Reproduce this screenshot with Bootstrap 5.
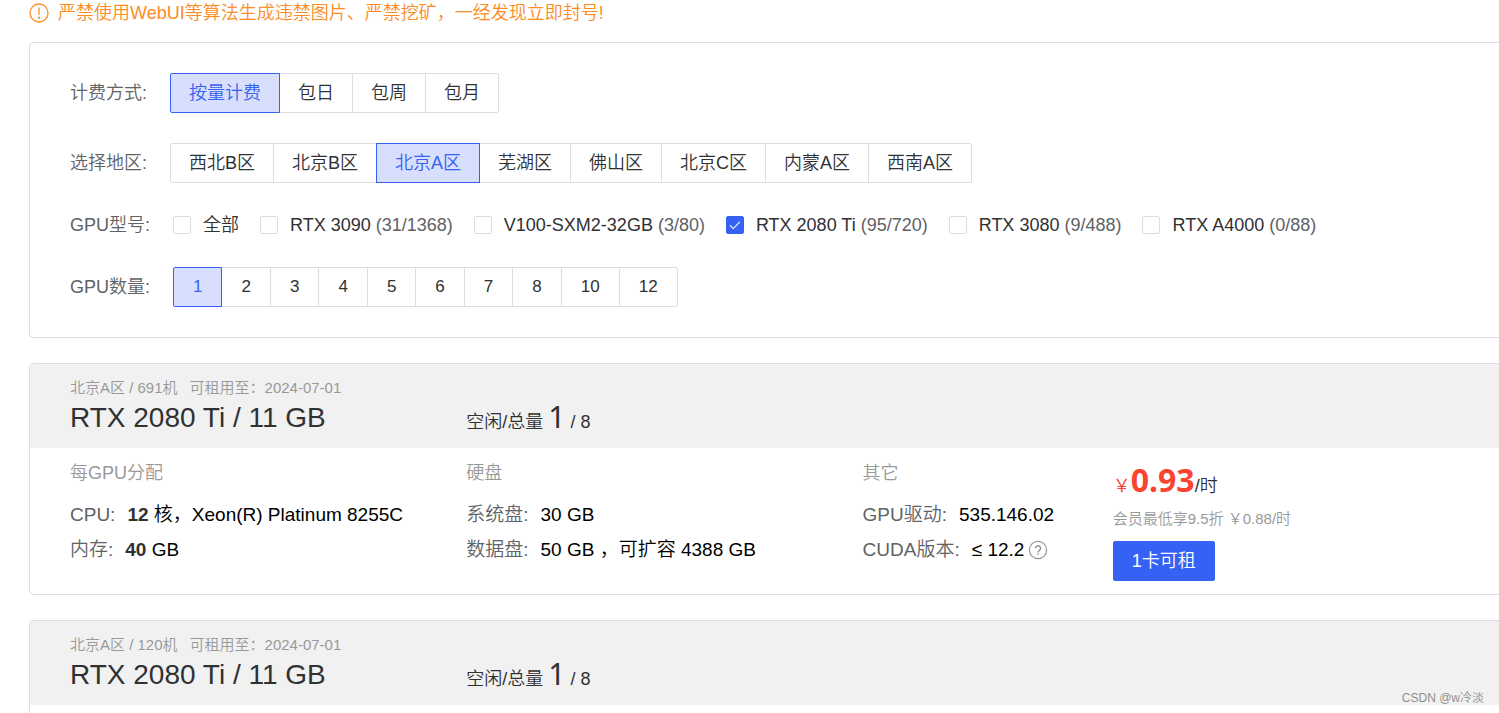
<!DOCTYPE html>
<html lang="zh-CN">
<head>
<meta charset="utf-8">
<meta name="viewport" content="width=device-width, initial-scale=1">
<title>GPU 租用</title>
<link rel="stylesheet" href="https://cdn.jsdelivr.net/npm/bootstrap@5.3.0/dist/css/bootstrap.min.css">
<style>
  :root { --line: #dcdde3; --brand: #3562f5; --brand-soft: #d7dffc; }
  body { font-family: "Liberation Sans", "Noto Sans CJK SC", sans-serif; font-size: 18px; font-weight: 350; line-height: 24px; color: #303133; background: #fff; }
  .page { padding-left: 29px; }
  .notice { color: #fc8c23; height: 26px; margin-bottom: 16px; gap: 9px; }
  .panel { border: 1px solid var(--line); border-right: 0; border-radius: 5px 0 0 5px; }
  .filters { padding: 30px 40px; display: flex; flex-direction: column; gap: 30px; margin-bottom: 25px; }
  .filter-row { gap: 23px; }
  .caption { color: #606266; }
  .options .btn { --bs-btn-padding-x: 18px; --bs-btn-padding-y: 7px; --bs-btn-font-size: 18px; --bs-btn-font-weight: 350; --bs-btn-line-height: 24px; --bs-btn-color: #303133; --bs-btn-border-color: var(--line); --bs-btn-border-radius: 2px; --bs-btn-hover-color: var(--brand); --bs-btn-hover-border-color: var(--line); --bs-btn-active-color: var(--brand); --bs-btn-active-bg: var(--brand-soft); --bs-btn-active-border-color: var(--brand); }
  .counts .btn { --bs-btn-padding-x: 19px; --bs-btn-font-size: 17px; }
  .models { gap: 21px; }
  .model { gap: 12px; }
  .model .form-check-input { width: 18px; height: 18px; margin: 0; border: 1px solid var(--line); border-radius: 2px; }
  .model .form-check-input:checked { background-color: var(--brand); border-color: var(--brand); background-image: url("data:image/svg+xml,%3Csvg xmlns='http://www.w3.org/2000/svg' viewBox='0 0 18 18'%3E%3Cpath d='M3.5 9.5l3.5 3.5L14.5 5.5' fill='none' stroke='white' stroke-width='1.3'/%3E%3C/svg%3E"); }
  .machine { margin-bottom: 25px; }
  .cells { display: grid; grid-template-columns: 396fr 396fr 250fr 386fr; padding-left: 40px; }
  .machine-head { background: #f1f1f1; height: 84px; padding-top: 14px; border-radius: 4px 0 0 0; }
  .meta { font-size: 15px; line-height: 20px; color: #999; gap: 12px; }
  .title { font-size: 28px; line-height: 34px; margin: 3px 0 0; font-weight: 400; }
  .stock { align-self: end; line-height: 34px; padding-bottom: 9px; }
  .idle { font-family: "Noto Sans", sans-serif; font-size: 30px; font-weight: 400; line-height: 24px; }
  .machine-body { height: 146px; padding-top: 13px; }
  .group { color: #999; margin-bottom: 12px; }
  .spec { font-size: 19px; line-height: 35px; color: #000; white-space: nowrap; }
  .spec .caption { margin-right: 12px; }
  .spec b { color: #303133; font-weight: 700; }
  .price { line-height: 38px; }
  .price-num { font-family: "Noto Sans", sans-serif; font-size: 32px; font-weight: 700; color: #fa4432; line-height: 38px; }
  .yen { color: #fa4432; }
  .member { font-size: 15px; line-height: 20px; color: #999; margin: 4px 0 12px; }
  .rent { --bs-btn-padding-x: 18px; --bs-btn-padding-y: 7px; --bs-btn-font-size: 18px; --bs-btn-font-weight: 350; --bs-btn-line-height: 24px; --bs-btn-bg: var(--brand); --bs-btn-border-color: var(--brand); --bs-btn-border-radius: 2px; }
  .watermark { position: absolute; right: 15px; bottom: 6px; font-size: 12px; line-height: 18px; color: #909090; }
</style>
</head>
<body>
<div class="page vh-100 overflow-hidden position-relative d-flex flex-column">
  <div class="notice d-flex align-items-center flex-shrink-0">
    <svg width="20" height="20" viewBox="0 0 20 20" fill="none" stroke="currentColor" stroke-width="1.3" aria-hidden="true"><circle cx="10" cy="10" r="9"/><path d="M10 4.5v7.5"/><circle cx="10" cy="14.7" r=".5"/></svg>
    <span>严禁使用WebUI等算法生成违禁图片、严禁挖矿，一经发现立即封号!</span>
  </div>

  <form class="panel filters flex-shrink-0">
    <div class="filter-row d-flex align-items-center">
      <span class="caption">计费方式:</span>
      <div class="btn-group options" role="group" aria-label="计费方式">
        <input class="btn-check" type="radio" name="bill" id="b1" checked><label class="btn" for="b1">按量计费</label>
        <input class="btn-check" type="radio" name="bill" id="b2"><label class="btn" for="b2">包日</label>
        <input class="btn-check" type="radio" name="bill" id="b3"><label class="btn" for="b3">包周</label>
        <input class="btn-check" type="radio" name="bill" id="b4"><label class="btn" for="b4">包月</label>
      </div>
    </div>
    <div class="filter-row d-flex align-items-center">
      <span class="caption">选择地区:</span>
      <div class="btn-group options" role="group" aria-label="选择地区">
        <input class="btn-check" type="radio" name="area" id="a1"><label class="btn" for="a1">西北B区</label>
        <input class="btn-check" type="radio" name="area" id="a2"><label class="btn" for="a2">北京B区</label>
        <input class="btn-check" type="radio" name="area" id="a3" checked><label class="btn" for="a3">北京A区</label>
        <input class="btn-check" type="radio" name="area" id="a4"><label class="btn" for="a4">芜湖区</label>
        <input class="btn-check" type="radio" name="area" id="a5"><label class="btn" for="a5">佛山区</label>
        <input class="btn-check" type="radio" name="area" id="a6"><label class="btn" for="a6">北京C区</label>
        <input class="btn-check" type="radio" name="area" id="a7"><label class="btn" for="a7">内蒙A区</label>
        <input class="btn-check" type="radio" name="area" id="a8"><label class="btn" for="a8">西南A区</label>
      </div>
    </div>
    <div class="filter-row d-flex align-items-center">
      <span class="caption">GPU型号:</span>
      <div class="models d-flex text-nowrap">
        <div class="model d-flex align-items-center"><input class="form-check-input" type="checkbox" id="m1"><label for="m1">全部</label></div>
        <div class="model d-flex align-items-center"><input class="form-check-input" type="checkbox" id="m2"><label for="m2">RTX 3090 <span class="caption">(31/1368)</span></label></div>
        <div class="model d-flex align-items-center"><input class="form-check-input" type="checkbox" id="m3"><label for="m3">V100-SXM2-32GB <span class="caption">(3/80)</span></label></div>
        <div class="model d-flex align-items-center"><input class="form-check-input" type="checkbox" id="m4" checked><label for="m4">RTX 2080 Ti <span class="caption">(95/720)</span></label></div>
        <div class="model d-flex align-items-center"><input class="form-check-input" type="checkbox" id="m5"><label for="m5">RTX 3080 <span class="caption">(9/488)</span></label></div>
        <div class="model d-flex align-items-center"><input class="form-check-input" type="checkbox" id="m6"><label for="m6">RTX A4000 <span class="caption">(0/88)</span></label></div>
      </div>
    </div>
    <div class="filter-row d-flex align-items-center">
      <span class="caption">GPU数量:</span>
      <div class="btn-group options counts" role="group" aria-label="GPU数量">
        <input class="btn-check" type="radio" name="num" id="n1" checked><label class="btn" for="n1">1</label>
        <input class="btn-check" type="radio" name="num" id="n2"><label class="btn" for="n2">2</label>
        <input class="btn-check" type="radio" name="num" id="n3"><label class="btn" for="n3">3</label>
        <input class="btn-check" type="radio" name="num" id="n4"><label class="btn" for="n4">4</label>
        <input class="btn-check" type="radio" name="num" id="n5"><label class="btn" for="n5">5</label>
        <input class="btn-check" type="radio" name="num" id="n6"><label class="btn" for="n6">6</label>
        <input class="btn-check" type="radio" name="num" id="n7"><label class="btn" for="n7">7</label>
        <input class="btn-check" type="radio" name="num" id="n8"><label class="btn" for="n8">8</label>
        <input class="btn-check" type="radio" name="num" id="n10"><label class="btn" for="n10">10</label>
        <input class="btn-check" type="radio" name="num" id="n12"><label class="btn" for="n12">12</label>
      </div>
    </div>
  </form>

  <section class="panel machine flex-shrink-0">
    <div class="machine-head cells">
      <div>
        <div class="meta d-flex"><span>北京A区 / 691机</span><span>可租用至：2024-07-01</span></div>
        <h2 class="title">RTX 2080 Ti / 11 GB</h2>
      </div>
      <div class="stock">空闲/总量 <span class="idle">1</span> / 8</div>
    </div>
    <div class="machine-body cells">
      <div>
        <div class="group">每GPU分配</div>
        <div class="spec"><span class="caption">CPU:</span><b>12</b> 核，Xeon(R) Platinum 8255C</div>
        <div class="spec"><span class="caption">内存:</span><b>40</b> GB</div>
      </div>
      <div>
        <div class="group">硬盘</div>
        <div class="spec"><span class="caption">系统盘:</span>30 GB</div>
        <div class="spec"><span class="caption">数据盘:</span>50 GB ，可扩容 4388 GB</div>
      </div>
      <div>
        <div class="group">其它</div>
        <div class="spec"><span class="caption">GPU驱动:</span>535.146.02</div>
        <div class="spec d-flex align-items-center"><span class="caption">CUDA版本:</span>≤ 12.2
          <svg class="ms-1" width="20" height="20" viewBox="0 0 20 20" fill="none" stroke="#999" stroke-width="1.2" role="img" aria-label="说明"><circle cx="10" cy="10" r="8.6"/><path d="M7.4 8.2a2.6 2.5 0 1 1 4 2.1c-.9.6-1.4 1-1.4 2.1" stroke-width="1.5"/><path d="M10 13.4v1.5" stroke-width="1.5"/></svg>
        </div>
      </div>
      <div>
        <div class="price"><span class="yen">￥</span><span class="price-num">0.93</span>/时</div>
        <div class="member">会员最低享9.5折 ￥0.88/时</div>
        <button type="button" class="btn btn-primary rent">1卡可租</button>
      </div>
    </div>
  </section>

  <section class="panel flex-grow-1 border-bottom-0">
    <div class="machine-head cells">
      <div>
        <div class="meta d-flex"><span>北京A区 / 120机</span><span>可租用至：2024-07-01</span></div>
        <h2 class="title">RTX 2080 Ti / 11 GB</h2>
      </div>
      <div class="stock">空闲/总量 <span class="idle">1</span> / 8</div>
    </div>
    <div class="machine-body"></div>
  </section>
  <div class="watermark">CSDN @w冷淡</div>
</div>
<script src="https://cdn.jsdelivr.net/npm/bootstrap@5.3.0/dist/js/bootstrap.bundle.min.js"></script>
</body>
</html>
